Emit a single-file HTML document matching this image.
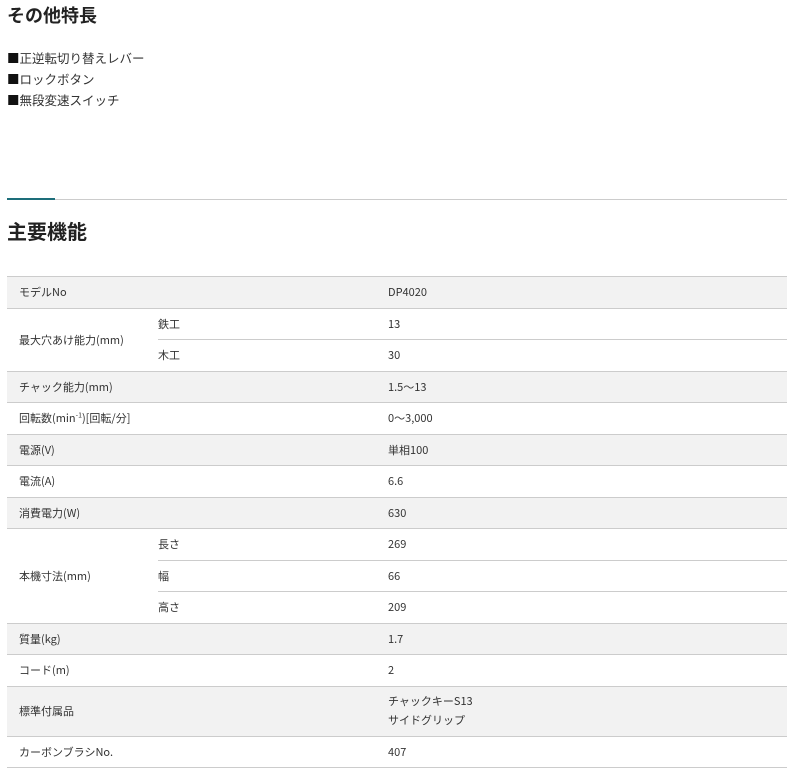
<!DOCTYPE html>
<html><head><meta charset="utf-8"><style>
body{margin:0;background:#fff;font-family:"Liberation Sans","Noto Sans CJK JP",sans-serif;color:#222;}
h2{position:absolute;margin:0;font-weight:bold;}
.t1{left:7px;top:4px;font-size:18px;line-height:24px;}
.list{position:absolute;left:7px;top:47px;font-size:12.5px;color:#333;font-family:"Noto Sans CJK JP",sans-serif;}
.list div{height:21px;line-height:21px;overflow:visible;white-space:nowrap;}
.sq{color:#111;}
.hr{position:absolute;left:7px;top:199px;width:780px;height:1px;background:#ccc;}
.hr2{position:absolute;left:7px;top:198px;width:48px;height:2px;background:#1d6e7a;}
.t2{left:7px;top:220px;font-size:20px;line-height:26px;}
table{position:absolute;left:7px;top:276px;width:780px;border-collapse:collapse;font-size:11px;color:#333;font-family:"Noto Sans CJK JP",sans-serif;}
td{border-top:1px solid #ccc;border-bottom:1px solid #ccc;height:30.5px;padding:0;vertical-align:middle;}
td.a{padding-left:12px;width:139px;}
td.b{width:230px;}
tr.g td{background:#f2f2f2;}
</style></head><body>
<h2 class="t1">その他特長</h2>
<div class="list"><div><span class="sq">■</span>正逆転切り替えレバー</div><div><span class="sq">■</span>ロックボタン</div><div><span class="sq">■</span>無段変速スイッチ</div></div>
<div class="hr"></div><div class="hr2"></div>
<h2 class="t2">主要機能</h2>
<table>
<tr class="g"><td class="a">モデルNo</td><td class="b"></td><td>DP4020</td></tr>
<tr><td class="a" rowspan="2">最大穴あけ能力(mm)</td><td class="b">鉄工</td><td>13</td></tr>
<tr><td class="b">木工</td><td>30</td></tr>
<tr class="g"><td class="a">チャック能力(mm)</td><td class="b"></td><td>1.5～13</td></tr>
<tr><td class="a">回転数(min<sup style="font-size:7px;line-height:0">-1</sup>)[回転/分]</td><td class="b"></td><td>0～3,000</td></tr>
<tr class="g"><td class="a">電源(V)</td><td class="b"></td><td>単相100</td></tr>
<tr><td class="a">電流(A)</td><td class="b"></td><td>6.6</td></tr>
<tr class="g"><td class="a">消費電力(W)</td><td class="b"></td><td>630</td></tr>
<tr><td class="a" rowspan="3">本機寸法(mm)</td><td class="b">長さ</td><td>269</td></tr>
<tr><td class="b">幅</td><td>66</td></tr>
<tr><td class="b">高さ</td><td>209</td></tr>
<tr class="g"><td class="a">質量(kg)</td><td class="b"></td><td>1.7</td></tr>
<tr><td class="a">コード(m)</td><td class="b"></td><td>2</td></tr>
<tr class="g"><td class="a" style="height:49px">標準付属品</td><td class="b"></td><td style="line-height:19px">チャックキーS13<br>サイドグリップ</td></tr>
<tr><td class="a">カーボンブラシNo.</td><td class="b"></td><td>407</td></tr>
</table>
</body></html>
